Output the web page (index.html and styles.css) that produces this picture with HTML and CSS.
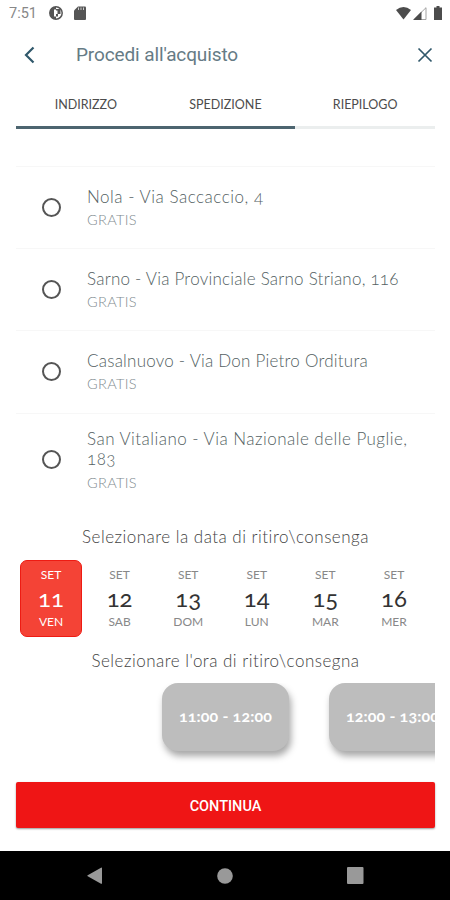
FILE: index.html
```html
<!DOCTYPE html>
<html lang="it">
<head>
<meta charset="utf-8">
<title>Procedi all'acquisto</title>
<link rel="stylesheet" href="styles.css">
</head>
<body>
<div class="status">
  <span class="clock">7:51</span>
  <svg class="app-icon" width="14" height="14" viewBox="0 0 14 14"><circle cx="7" cy="7" r="6.2" fill="#fff" stroke="#555" stroke-width="1.500"/><path d="M7 .8A6.200 6.200 0 0 0 7 13.200V10.500H5V3.500h2z" fill="#555"/><path d="M7 3h4.500v5H9v2.500H7V8h1.500V4.500H7z" fill="#555"/></svg>
  <svg class="sd-icon" width="12" height="14" viewBox="0 0 12 14"><path d="M4 .5h7q1 0 1 1V13q0 1-1 1H1q-1 0-1-1V4.500z" fill="#555"/><path d="M4.500 1.500v2.500M7 1.500v2.500M9.500 1.500v2.500" stroke="#ccc"/></svg>
  <span class="spacer"></span>
  <svg width="15" height="13" viewBox="0 0 15 13"><path d="M0 3Q7.500-3 15 3L7.500 12.500z" fill="#4c4c4c"/></svg>
  <svg class="signal" width="14" height="13" viewBox="0 0 14 13"><path d="M1 12.500 13 .7v11.800z" fill="#fff" stroke="#999" stroke-width=".9"/><path d="M0 13 8.500 4.500V13z" fill="#4c4c4c"/></svg>
  <svg class="battery" width="8" height="14" viewBox="0 0 8 14"><path d="M2.500 0h3v1.500H8V14H0V1.500h2.500z" fill="#4c4c4c"/></svg>
</div>
<header class="header">
  <svg width="12" height="18" viewBox="0 0 12 18"><path d="M10.500 1.500 3 9l7.500 7.500" fill="none" stroke="#30586b" stroke-width="2.200"/></svg>
  <h1 class="title">Procedi all'acquisto</h1>
  <svg width="16" height="16" viewBox="0 0 16 16"><path d="m1.500 1.500 13 13m0-13-13 13" stroke="#30586b" stroke-width="1.700"/></svg>
</header>
<nav class="tabs">
  <div class="tab done">INDIRIZZO</div>
  <div class="tab done">SPEDIZIONE</div>
  <div class="tab">RIEPILOGO</div>
</nav>
<main class="content">
  <ul class="places">
    <li class="place"><i class="radio"></i><div><p class="name n1">Nola - Via Saccaccio, 4</p><p class="price">GRATIS</p></div></li>
    <li class="place"><i class="radio"></i><div><p class="name n2">Sarno - Via Provinciale Sarno Striano, 116</p><p class="price">GRATIS</p></div></li>
    <li class="place"><i class="radio"></i><div><p class="name n3">Casalnuovo - Via Don Pietro Orditura</p><p class="price">GRATIS</p></div></li>
    <li class="place tall"><i class="radio"></i><div><p class="name n4">San Vitaliano - Via Nazionale delle Puglie,<br>183</p><p class="price">GRATIS</p></div></li>
  </ul>
  <h2 class="prompt p1">Selezionare la data di ritiro\consenga</h2>
  <div class="days">
    <div class="day active"><span>SET</span><b>11</b><span>VEN</span></div>
    <div class="day"><span>SET</span><b>12</b><span>SAB</span></div>
    <div class="day"><span>SET</span><b>13</b><span>DOM</span></div>
    <div class="day"><span>SET</span><b>14</b><span>LUN</span></div>
    <div class="day"><span>SET</span><b>15</b><span>MAR</span></div>
    <div class="day"><span>SET</span><b>16</b><span>MER</span></div>
  </div>
  <h2 class="prompt p2">Selezionare l'ora di ritiro\consegna</h2>
  <div class="slots">
    <div class="slot">11:00 - 12:00</div>
    <div class="slot">12:00 - 13:00</div>
  </div>
  <button class="continue">CONTINUA</button>
</main>
<footer class="navbar">
  <svg width="16" height="18" viewBox="0 0 16 18"><path d="M.7 8.300 14 .7q1-.5 1 .5v15q0 1-1 .5L.7 9.200q-.8-.4 0-.9z" fill="#999"/></svg>
  <svg width="16" height="16" viewBox="0 0 16 16"><circle cx="8" cy="8" r="7.800" fill="#999"/></svg>
  <svg width="17" height="17" viewBox="0 0 17 17"><rect width="16.500" height="17" rx="1" fill="#999"/></svg>
</footer>
</body>
</html>
```

FILE: styles.css
```css
* { box-sizing: border-box; }
body {
  margin: 0;
  width: 450px;
  height: 900px;
  display: flex;
  flex-direction: column;
  overflow: hidden;
  background: #fff;
  font-family: Lato, "Open Sans", sans-serif;
  font-variant-numeric: oldstyle-nums;
}
h1, h2, p, ul { margin: 0; padding: 0; font-weight: 400; }
svg { display: block; flex: none; }

.status { height: 26px; display: flex; align-items: center; padding: 0 8px 0 9px; }
.clock { width: 40px; font: 14.5px/26px Roboto, sans-serif; color: #888; padding-top: 1px; }
.sd-icon { margin-left: 11px; }
.spacer { flex: 1; }
.signal { margin-left: 2px; }
.battery { margin-left: 7px; }

.header { height: 58px; display: flex; align-items: center; padding: 0 17px 0 23px; }
.title { flex: 1; margin-left: 41px; font: 400 19px/24px Roboto, sans-serif; color: #667b85; letter-spacing: -.12px; }

.tabs { height: 45px; margin: 0 15px 0 16px; display: grid; grid-template-columns: repeat(3, 1fr); }
.tab { border-bottom: 3px solid #ebeeee; text-align: center; font-size: 12.5px; line-height: 42px; color: #4c4c4c; }
.tab.done { border-color: #4d6570; }

.content { flex: 1; margin: 0 15px 0 16px; display: flex; flex-direction: column; }
.places { list-style: none; margin-top: 37px; }
.place { height: 82.2px; border-top: 1px solid #f7f7f7; display: flex; align-items: center; padding: 2px 0 0 26px; }
.place.tall { height: 95px; padding-top: 0; }
.radio { flex: none; width: 19px; height: 19px; margin: -2px 26px 0 0; border: 2px solid #555; border-radius: 50%; }
.name { font-size: 17px; font-weight: 300; line-height: 20px; color: #545f63; white-space: nowrap; }
.n1 { letter-spacing: .52px; }
.n2, .n3 { letter-spacing: .23px; }
.n4 { letter-spacing: .47px; }
.price { margin-top: 3px; font-size: 14.5px; font-weight: 300; line-height: 20px; color: #7f8b8f; letter-spacing: .35px; }
.tall .price { margin-top: 4px; }

.prompt { text-align: center; font-size: 17px; font-weight: 300; line-height: 22px; color: #444; letter-spacing: .48px; }
.p1 { margin-top: 18px; }
.days { height: 78px; margin: 12px 6px 0 4px; display: grid; grid-template-columns: repeat(6, 62px); column-gap: 6.600px; }
.day { display: flex; flex-direction: column; align-items: center; padding-top: 7px; border-radius: 7px; color: #888; font-size: 12px; line-height: 15px; }
.day b { font-size: 24px; line-height: 32px; font-weight: 400; color: #333; }
.day.active { height: 77px; background: #f44336; border: 1px solid #ee1b13; padding-top: 6px; color: #fff; }
.day.active b { color: #fff; }
.p2 { margin-top: 12px; }
.slots { height: 88px; margin-top: 11px; padding-left: 146px; display: flex; gap: 40px; overflow: hidden; }
.slot { flex: none; width: 127px; height: 68px; border-radius: 16px; background: #bdbdbd; box-shadow: 2px 5px 7px rgba(0,0,0,.35); color: #fff; text-align: center; font-size: 16px; font-weight: 700; line-height: 66px; white-space: nowrap; letter-spacing: .15px; }
.continue { height: 46px; margin-top: 11px; padding-top: 4px; border: 0; border-radius: 2px; background: #ef1515; box-shadow: 0 1px 2px rgba(0,0,0,.4); color: #fff; font: 500 14.5px Roboto, sans-serif; }

.navbar { height: 49px; background: #000; display: flex; align-items: center; justify-content: space-between; padding: 0 86px 0 87px; }
```
